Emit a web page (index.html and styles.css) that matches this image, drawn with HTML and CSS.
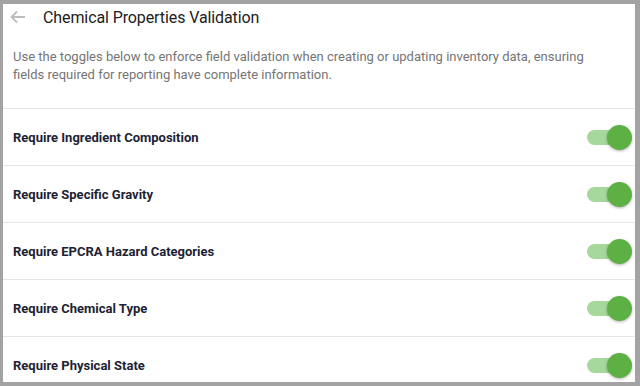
FILE: index.html
```html
<!DOCTYPE html>
<html lang="en">
<head>
    <meta charset="UTF-8">
    <title>Chemical Properties Validation</title>
    <link rel="stylesheet" href="styles.css">
</head>
<body>
<div class="panel">
    <div class="header">
        <svg class="back" width="16" height="14" viewBox="0 0 16 14">
            <path d="M15 7H1.5M7 1.5L1.5 7 7 12.5" fill="none" stroke="#bdbdbd" stroke-width="1.8"/>
        </svg>
        <h1>Chemical Properties Validation</h1>
    </div>
    <p class="desc">Use the toggles below to enforce field validation when creating or updating inventory data, ensuring fields required for reporting have complete information.</p>

    <div class="row">
        <span class="label">Require Ingredient Composition</span>
        <span class="toggle"><span class="thumb"></span></span>
    </div>
    <div class="row">
        <span class="label">Require Specific Gravity</span>
        <span class="toggle"><span class="thumb"></span></span>
    </div>
    <div class="row">
        <span class="label">Require EPCRA Hazard Categories</span>
        <span class="toggle"><span class="thumb"></span></span>
    </div>
    <div class="row">
        <span class="label">Require Chemical Type</span>
        <span class="toggle"><span class="thumb"></span></span>
    </div>
    <div class="row">
        <span class="label">Require Physical State</span>
        <span class="toggle"><span class="thumb"></span></span>
    </div>
</div>
</body>
</html>
```

FILE: styles.css
```css
html, body {
    margin: 0;
    height: 100%;
}
body {
    background: #a3a3a3;
    font-family: Roboto, "Liberation Sans", sans-serif;
    padding: 4px 5px 4px 3px;
    box-sizing: border-box;
    overflow: hidden;
}
.panel {
    background: #fff;
    height: 378px;
    overflow: hidden;
}
.header {
    display: flex;
    align-items: center;
    height: 26px;
    padding-left: 7px;
}
.back {
    display: block;
    margin-right: 17px;
}
.header h1 {
    margin: 0;
    font-size: 16px;
    font-weight: 400;
    color: #212121;
    letter-spacing: -0.1px;
}
.desc {
    margin: 18px 0 0;
    padding: 0 40px 24px 10px;
    font-size: 13px;
    line-height: 18px;
    color: #757575;
    border-bottom: 1px solid #e6e6e6;
}
.row {
    display: flex;
    align-items: center;
    justify-content: space-between;
    height: 56px;
    padding: 0 8px 0 10px;
    border-bottom: 1px solid #e6e6e6;
}
.label {
    font-size: 13px;
    font-weight: 700;
    color: #1d2233;
}
.toggle {
    position: relative;
    width: 40px;
    height: 15px;
    border-radius: 8px;
    background: #a6d79b;
}
.thumb {
    position: absolute;
    right: -5px;
    top: -5px;
    width: 25px;
    height: 25px;
    border-radius: 50%;
    background: #5db043;
    box-shadow: 0 1px 3px rgba(0, 0, 0, 0.3);
}
```
